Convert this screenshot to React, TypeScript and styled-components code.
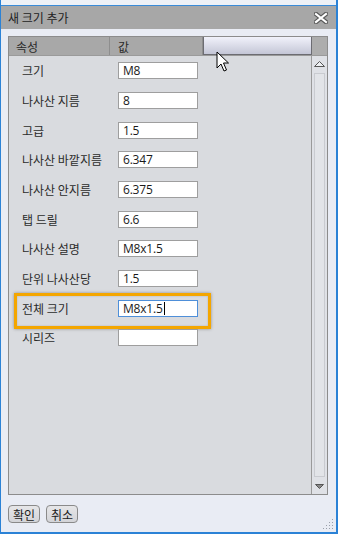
import styled, {createGlobalStyle} from "styled-components";

/**     STYLED      **/
const Global = createGlobalStyle`
    html, body {
        margin: 0;
        padding: 0;
        background: #e9ecf4;
    }
    * {
        box-sizing: border-box;
    }
`

const Window = styled.div`
    position: relative;
    width: 338px;
    height: 534px;
    display: flex;
    flex-direction: column;
    background: #e9ecf4;
    border-left: 1px solid #2b82d6;
    border-right: 2px solid #2b82d6;
    border-bottom: 2px solid #2b82d6;
    font-family: "Noto Sans CJK KR", "Noto Sans", sans-serif;
    color: #222;
`

const TopEdge = styled.div`
    height: 6px;
    background: #eef1f6;
    border-bottom: 1px solid #3a8bd8;
`

const TitleBar = styled.div`
    height: 23px;
    display: flex;
    align-items: center;
    justify-content: space-between;
    padding: 0 8px 0 7px;
    background: #a7a7a7;
    font-size: 12px;
    color: #1e1e1e;
`

const Body = styled.div`
    flex: 1;
    display: flex;
    flex-direction: column;
    padding: 7px 8px 0 7px;
`

const Panel = styled.div`
    height: 459px;
    display: flex;
    flex-direction: column;
    border: 1px solid #8c8c8c;
    background: #d9dbdf;
`

const HeaderRow = styled.div`
    height: 19px;
    display: grid;
    grid-template-columns: 101px 93px 109px 1fr;
    background: #a8a8a8;
    border-bottom: 1px solid #9a9a9a;
    font-size: 12px;
`

const HeaderCell = styled.div<{ $pad: number; $hover?: boolean }>`
    display: flex;
    align-items: center;
    padding-left: ${p => p.$pad}px;
    color: #2a2a2a;
    border-right: 1px solid #8e8e8e;
    ${p => p.$hover && `
        background: linear-gradient(#f1f2fb, #c4c6d6);
        border: 1px solid #6c6c72;
        border-top: none;
    `}
`

const Corner = styled.div`
    background: #adadad;
`

const Content = styled.div`
    flex: 1;
    display: flex;
`

const Rows = styled.div`
    flex: 1;
    display: flex;
    flex-direction: column;
`

const Row = styled.div<{ $marked?: boolean }>`
    position: relative;
    height: 29.67px;
    display: grid;
    grid-template-columns: 109px 1fr;
    align-items: center;
    font-size: 12px;
    color: #2b2b2b;
    ${p => p.$marked && `
        &::before {
            content: "";
            position: absolute;
            left: 5px;
            top: 0;
            width: 191px;
            height: 30px;
            border: 3px solid #f4a600;
            box-shadow: 0 0 3px rgba(0,0,0,0.35), inset 0 0 2px rgba(0,0,0,0.2);
        }
    `}
`

const Label = styled.span`
    padding-left: 13px;
    white-space: nowrap;
`

const Field = styled.div<{ $focus?: boolean }>`
    width: 80px;
    height: 17px;
    display: flex;
    align-items: center;
    padding-left: 4px;
    background: #fff;
    border: 1px solid ${p => p.$focus ? "#4e8fd9" : "#9e9e9e"};
    font-family: "Open Sans", "Noto Sans", sans-serif;
    font-size: 12px;
    letter-spacing: -0.2px;
    color: #1a1a1a;
`

const Caret = styled.span`
    display: inline-block;
    width: 1px;
    height: 13px;
    margin-left: 1px;
    background: #000;
`

const ScrollBar = styled.div`
    width: 16px;
    display: flex;
    flex-direction: column;
    align-items: center;
    background: #dfe1e6;
    border-left: 1px solid #9a9a9a;
`

const ArrowBox = styled.div`
    height: 16px;
    display: flex;
    align-items: center;
    justify-content: center;
`

const Thumb = styled.div`
    flex: 1;
    width: 11px;
    margin: 1px 0;
    border: 1px solid #c9cbd0;
    background: #e2e4e8;
`

const Footer = styled.div`
    display: flex;
    gap: 6px;
    padding-top: 10px;
`

const Button = styled.button`
    width: 32px;
    height: 18px;
    padding: 0;
    display: flex;
    align-items: center;
    justify-content: center;
    border: 1px solid #8a8a8a;
    border-radius: 4px;
    background: linear-gradient(#e6e6e8, #d3d4d8);
    font-family: "Noto Sans CJK KR", sans-serif;
    font-size: 12px;
    color: #1a1a1a;
`

const Pointer = styled.svg`
    position: absolute;
    left: 215px;
    top: 51px;
`

const Grip = styled.svg`
    position: absolute;
    right: 2px;
    bottom: 2px;
`
/**     STYLED      **/

const rows = [
    {label: "크기", value: "M8"},
    {label: "나사산 지름", value: "8"},
    {label: "고급", value: "1.5"},
    {label: "나사산 바깥지름", value: "6.347"},
    {label: "나사산 안지름", value: "6.375"},
    {label: "탭 드릴", value: "6.6"},
    {label: "나사산 설명", value: "M8x1.5"},
    {label: "단위 나사산당", value: "1.5"},
    {label: "전체 크기", value: "M8x1.5", marked: true},
    {label: "시리즈", value: ""},
]

export default function App() {
    return (
        <Window>
            <Global/>
            <TopEdge/>
            <TitleBar>
                <span>새 크기 추가</span>
                <svg width="14" height="12" viewBox="0 0 14 12">
                    <path d="M2 2 L12 10 M12 2 L2 10" stroke="#5a5a5a" strokeWidth="4.5" strokeLinecap="square"/>
                    <path d="M2 2 L12 10 M12 2 L2 10" stroke="#fff" strokeWidth="2.2" strokeLinecap="square"/>
                </svg>
            </TitleBar>
            <Body>
                <Panel>
                    <HeaderRow>
                        <HeaderCell $pad={7}>속성</HeaderCell>
                        <HeaderCell $pad={8}>값</HeaderCell>
                        <HeaderCell $pad={0} $hover/>
                        <Corner/>
                    </HeaderRow>
                    <Content>
                        <Rows>
                            {rows.map(r => (
                                <Row key={r.label} $marked={r.marked}>
                                    <Label>{r.label}</Label>
                                    <Field $focus={r.marked}>
                                        {r.value}
                                        {r.marked && <Caret/>}
                                    </Field>
                                </Row>
                            ))}
                        </Rows>
                        <ScrollBar>
                            <ArrowBox>
                                <svg width="11" height="6" viewBox="0 0 11 6">
                                    <path d="M0.5 5.5 L5.5 0.5 L10.5 5.5 Z" fill="#eef0f3" stroke="#555"/>
                                </svg>
                            </ArrowBox>
                            <Thumb/>
                            <ArrowBox>
                                <svg width="9" height="5" viewBox="0 0 9 5">
                                    <path d="M0.5 0.5 L8.5 0.5 L4.5 4.5 Z" fill="#888" stroke="#555"/>
                                </svg>
                            </ArrowBox>
                        </ScrollBar>
                    </Content>
                </Panel>
                <Footer>
                    <Button>확인</Button>
                    <Button>취소</Button>
                </Footer>
            </Body>
            <Pointer width="14" height="22" viewBox="0 0 14 22">
                <path d="M1 1 L1 17 L5 13 L8 20 L10.5 19 L7.5 12 L12.5 12 Z" fill="#fff" stroke="#000" strokeWidth="1" strokeLinejoin="round"/>
            </Pointer>
            <Grip width="12" height="12" viewBox="0 0 12 12">
                {[[10, 2], [10, 5], [7, 5], [10, 8], [7, 8], [4, 8], [10, 11], [7, 11], [4, 11], [1, 11]].map(([x, y]) => (
                    <rect key={`${x}-${y}`} x={x} y={y - 1} width="1" height="1" fill="#9aa0aa"/>
                ))}
            </Grip>
        </Window>
    )
}
